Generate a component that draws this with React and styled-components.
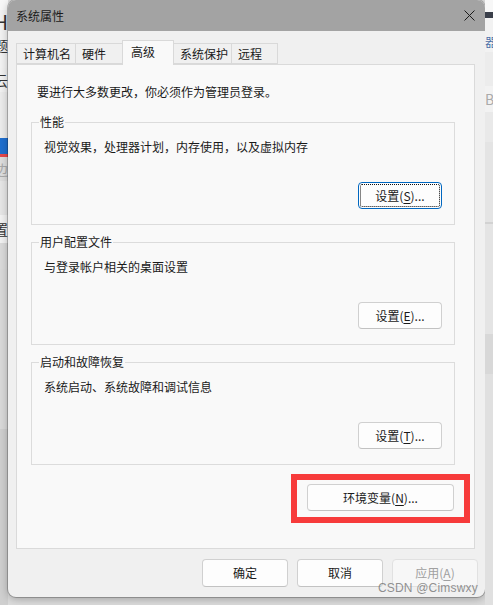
import styled, { createGlobalStyle } from "styled-components";

const GlobalStyle = createGlobalStyle`
  html, body {
    margin: 0;
    padding: 0;
  }
  body {
    font-family: "Noto Sans CJK SC", "Noto Sans", sans-serif;
    background: #e2e2e2;
  }
`;

const tabs = [
  { label: "计算机名", width: 60 },
  { label: "硬件", width: 48 },
  { label: "高级", width: 52, active: true },
  { label: "系统保护", width: 59 },
  { label: "远程", width: 47 },
];

const groups = [
  { title: "性能", text: "视觉效果，处理器计划，内存使用，以及虚拟内存", key: "S", focused: true },
  { title: "用户配置文件", text: "与登录帐户相关的桌面设置", key: "E" },
  { title: "启动和故障恢复", text: "系统启动、系统故障和调试信息", key: "T" },
];

const App = () => {
  return (
    <>
      <GlobalStyle />
      <Screen>
        <Side>
          <Block $h={10} $bg="#f7f7f7" />
          <Glyph $h={24} $size={20}>H</Glyph>
          <Glyph $h={22} $size={14}>题</Glyph>
          <Block $h={12} $bg="#f3f3f3" />
          <Glyph $h={24} $size={14}>云</Glyph>
          <Block $h={46} $bg="#ececec" />
          <Block $h={16} $bg="#1f6fcf" />
          <Block $h={3} $bg="#e5484d" />
          <Glyph $h={24} $size={14} $color="#aaa" $bg="#dedede">边</Glyph>
          <Block $h={34} $bg="#e6e6e6" />
          <Glyph $h={28} $size={14}>置</Glyph>
          <Block $h={26} $bg="#dadada" />
          <Block $h={160} $bg="#d9d9d9" />
          <Block $h={200} $bg="#cfcfcf" />
        </Side>
        <Window>
          <TitleBar>
            <Title>系统属性</Title>
            <svg width="11" height="11" viewBox="0 0 11 11">
              <path d="M0.5 0.5L10.5 10.5M10.5 0.5L0.5 10.5" stroke="#1b1b1b" strokeWidth="1" fill="none" />
            </svg>
          </TitleBar>
          <Body>
            <TabRow>
              {tabs.map((t) => (
                <Tab key={t.label} $active={t.active} $w={t.width}>
                  {t.label}
                </Tab>
              ))}
            </TabRow>
            <Panel>
              <Intro>要进行大多数更改，你必须作为管理员登录。</Intro>
              {groups.map((g) => (
                <Group key={g.title}>
                  <Legend>{g.title}</Legend>
                  <GroupText>{g.text}</GroupText>
                  <GroupActions>
                    <Button $w={84} $focused={g.focused}>
                      设置(<u>{g.key}</u>)...
                    </Button>
                  </GroupActions>
                </Group>
              ))}
              <EnvRow>
                <Highlight>
                  <Button $w={147}>
                    环境变量(<u>N</u>)...
                  </Button>
                </Highlight>
              </EnvRow>
            </Panel>
            <Footer>
              <Button $w={86} $h={28}>确定</Button>
              <Button $w={86} $h={28}>取消</Button>
              <Button $w={86} $h={28} disabled>
                应用(<u>A</u>)
              </Button>
            </Footer>
          </Body>
        </Window>
        <Side>
          <Block $h={12} $bg="#f7f7f7" />
          <Block $h={6} $bg="#3a3f4a" />
          <Block $h={14} $bg="#f2f2f2" />
          <Glyph $h={20} $size={12} $align="left" $color="#4a6fa8">器</Glyph>
          <Block $h={34} $bg="#ececec" />
          <Glyph $h={26} $size={14} $align="left" $color="#aaa">Bc</Glyph>
          <Block $h={30} $bg="#e9e9e9" />
          <Block $h={80} $bg="#e4e4e4" />
          <Block $h={2} $bg="#d2d2d2" />
          <Block $h={110} $bg="#e4e4e4" />
          <Block $h={40} $bg="#d8d8d8" />
          <Block $h={240} $bg="#e0e0e0" />
        </Side>
        <Watermark>CSDN @Cimswxy</Watermark>
      </Screen>
    </>
  );
};

const Screen = styled.div`
  position: relative;
  width: 493px;
  height: 605px;
  display: grid;
  grid-template-columns: 8px 477px 8px;
  overflow: hidden;
  background: #dcdcdc;
`;

const Side = styled.div`
  display: flex;
  flex-direction: column;
  overflow: hidden;
`;

const Block = styled.div`
  flex: none;
  height: ${(p) => p.$h}px;
  background: ${(p) => p.$bg};
`;

const Glyph = styled.div`
  flex: none;
  height: ${(p) => p.$h}px;
  overflow: hidden;
  background: ${(p) => p.$bg || "#f2f2f2"};
  color: ${(p) => p.$color || "#333"};
  font-size: ${(p) => p.$size}px;
  line-height: ${(p) => p.$h}px;
  white-space: nowrap;
  text-align: ${(p) => p.$align || "right"};
  direction: ${(p) => (p.$align === "left" ? "ltr" : "rtl")};
`;

const Window = styled.div`
  height: 597px;
  display: flex;
  flex-direction: column;
  background: #f0f0f0;
  border-radius: 8px;
  box-shadow: 0 0 0 1px rgba(0, 0, 0, 0.22), 0 2px 8px rgba(0, 0, 0, 0.28);
  overflow: hidden;
`;

const TitleBar = styled.div`
  flex: none;
  height: 31px;
  display: flex;
  align-items: center;
  justify-content: space-between;
  padding: 0 10px 0 8px;
  background: #a3a3a3;
`;

const Title = styled.span`
  font-size: 12px;
  line-height: 16px;
  color: #1b1b1b;
`;

const Body = styled.div`
  flex: 1;
  display: flex;
  flex-direction: column;
  padding: 9px 7px 10px 8px;
`;

const TabRow = styled.div`
  flex: none;
  height: 24px;
  display: flex;
  align-items: flex-end;
  padding-left: 1px;
  margin-right: 3px;
`;

const Tab = styled.div`
  position: relative;
  z-index: ${(p) => (p.$active ? 2 : 1)};
  box-sizing: border-box;
  width: ${(p) => p.$w}px;
  height: ${(p) => (p.$active ? 25 : 21)}px;
  margin-left: -1px;
  margin-bottom: ${(p) => (p.$active ? -1 : 0)}px;
  padding: ${(p) => (p.$active ? "3px 0 0 8px" : "2px 0 0 6px")};
  border: 1px solid #d9d9d9;
  border-bottom: ${(p) => (p.$active ? "none" : "1px solid #d9d9d9")};
  background: ${(p) => (p.$active ? "#f9f9f9" : "#f0f0f0")};
  font-size: 12px;
  line-height: 16px;
  color: #1a1a1a;
`;

const Panel = styled.div`
  flex: none;
  box-sizing: border-box;
  height: 485px;
  margin-right: 3px;
  display: flex;
  flex-direction: column;
  padding: 19px 19px 0 14px;
  border: 1px solid #dadada;
  background: #f9f9f9;
`;

const Intro = styled.div`
  margin-left: 6px;
  font-size: 12px;
  line-height: 16px;
  color: #1a1a1a;
`;

const Group = styled.fieldset`
  margin: 14px 0 0;
  padding: 0;
  min-width: 0;
  border: 1px solid #dcdcdc;

  & + & {
    margin-top: 9px;
  }
`;

const Legend = styled.legend`
  margin-left: 7px;
  padding: 0 1px;
  font-size: 12px;
  line-height: 16px;
  color: #1a1a1a;
`;

const GroupText = styled.div`
  padding: 9px 0 0 12px;
  font-size: 12px;
  line-height: 16px;
  color: #1a1a1a;
`;

const GroupActions = styled.div`
  display: flex;
  justify-content: flex-end;
  padding: 27px 12px 15px 0;
`;

const Button = styled.button`
  box-sizing: border-box;
  width: ${(p) => p.$w}px;
  height: ${(p) => p.$h || 27}px;
  padding: 0;
  border: 1px solid ${(p) => (p.$focused ? "#0067c0" : "#d0d0d0")};
  border-bottom-color: ${(p) => (p.$focused ? "#0067c0" : "#c2c2c2")};
  border-radius: 4px;
  background: #fdfdfd;
  font-family: inherit;
  font-size: 12px;
  line-height: 16px;
  color: #1a1a1a;
  outline: ${(p) => (p.$focused ? "1px dotted #111" : "none")};
  outline-offset: -3px;

  &:disabled {
    background: #f7f7f7;
    border-color: #e1e1e1;
    color: #a0a0a0;
  }

  u {
    text-underline-offset: 2px;
  }
`;

const EnvRow = styled.div`
  display: flex;
  justify-content: flex-end;
  margin-top: 19px;
  padding-right: 1px;
`;

const Highlight = styled.div`
  position: relative;
  display: flex;

  &::after {
    content: "";
    position: absolute;
    top: -10px;
    bottom: -12px;
    left: -16px;
    right: -16px;
    border: 6px solid #f73b3b;
    pointer-events: none;
  }
`;

const Footer = styled.div`
  flex: none;
  display: flex;
  justify-content: flex-end;
  gap: 9px;
  margin-top: 10px;
`;

const Watermark = styled.div`
  position: absolute;
  right: 15px;
  bottom: 10px;
  font-family: "Liberation Sans", Arial, sans-serif;
  font-size: 12px;
  line-height: 14px;
  letter-spacing: 0.2px;
  color: rgba(110, 110, 110, 0.75);
  pointer-events: none;
`;

export default App;
